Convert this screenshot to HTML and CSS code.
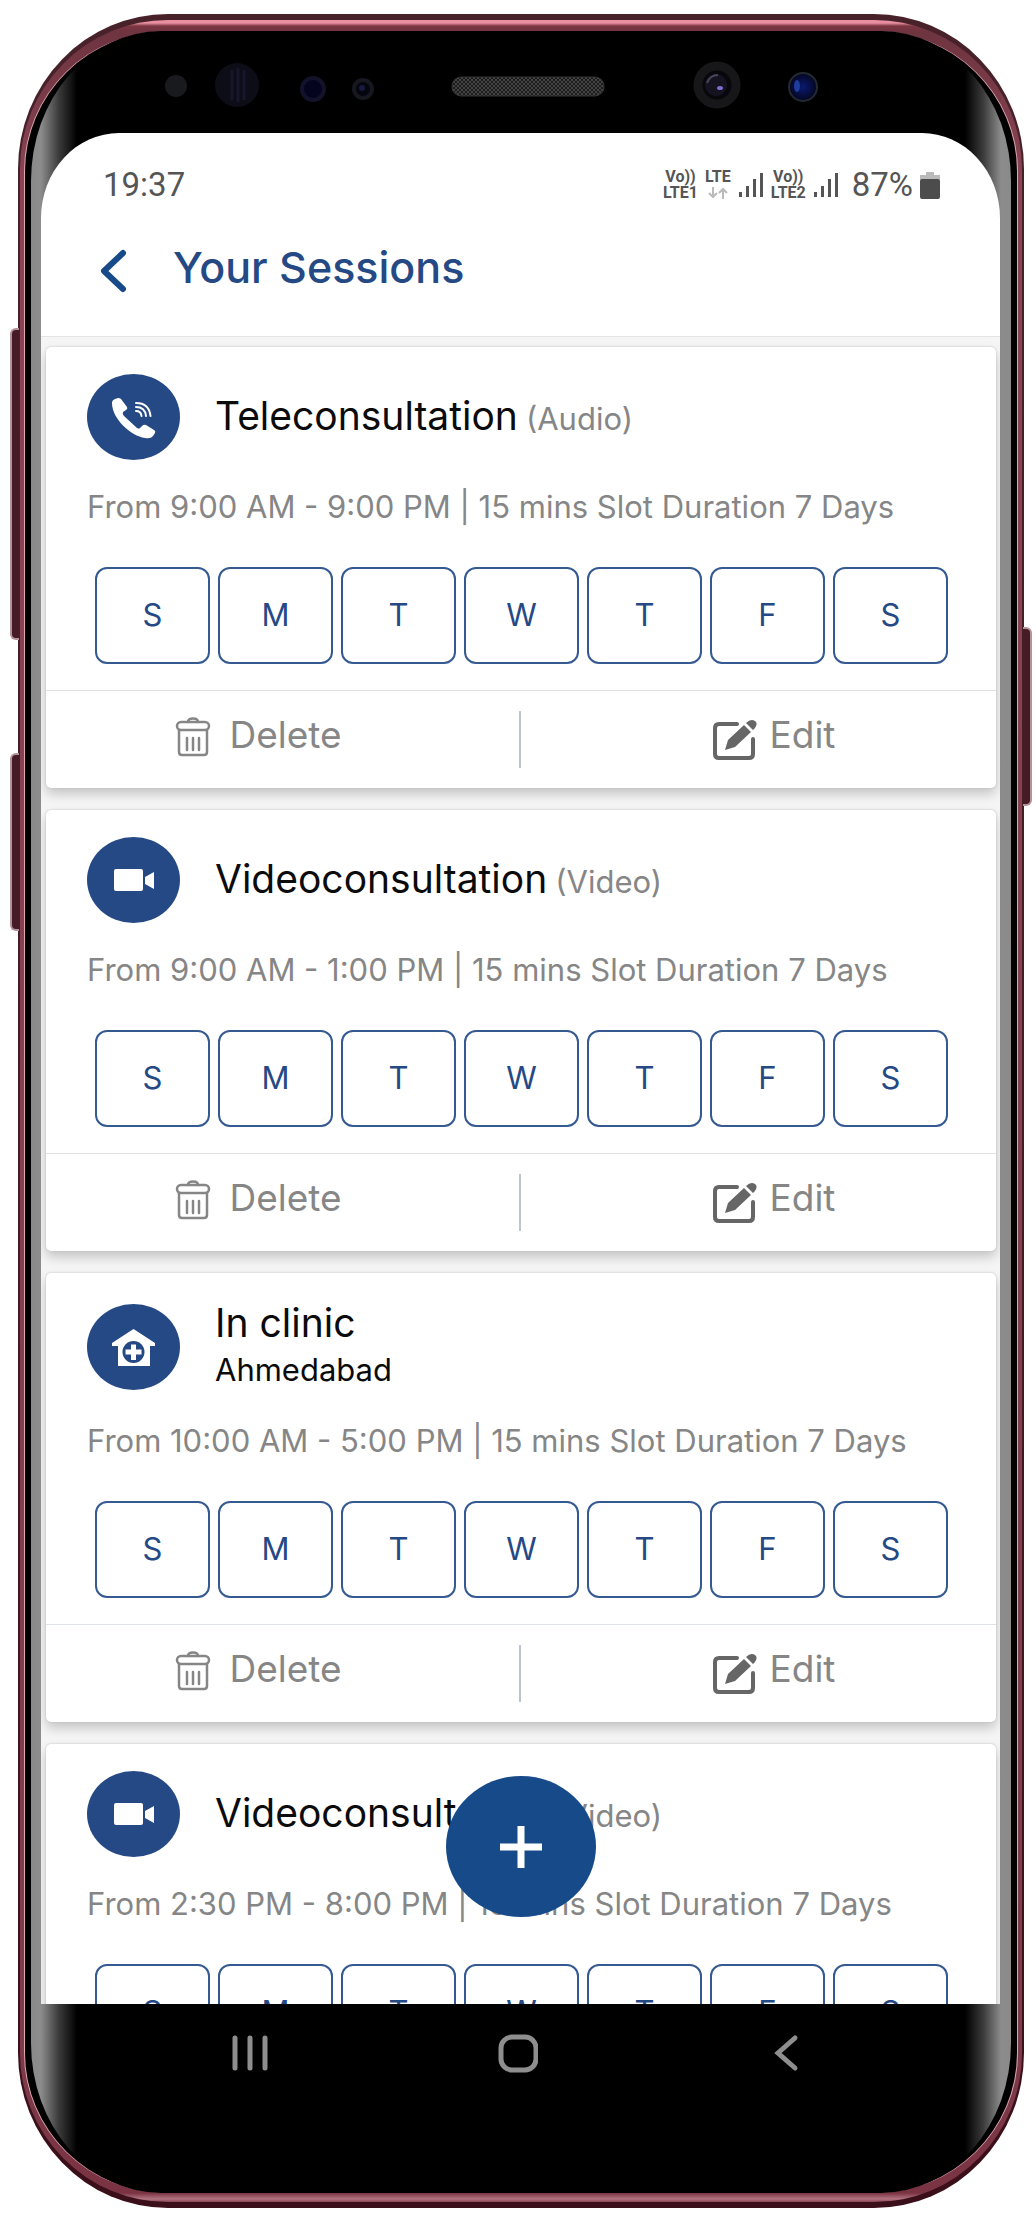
FILE: index.html
```html
<!DOCTYPE html>
<html lang="en">
<head>
<meta charset="utf-8">
<meta name="viewport" content="width=device-width, initial-scale=1">
<title>Your Sessions</title>
<link rel="stylesheet" href="styles.css">
</head>
<body>
<svg class="defs" aria-hidden="true">
  <symbol id="i-phone" viewBox="0 0 93 86">
    <path fill="#fff" d="M25 29Q25 26 28 25L31 24Q33 24 34 25L40 33Q41 35 39 36L36 38Q35 40 37 42L50 54Q52 55 53 54L55 52Q57 50 59 51L67 56Q69 57 68 59L66 62Q64 65 58 64C44 62 25 45 25 29Z"/>
    <path fill="none" stroke="#fff" stroke-width="2" stroke-linecap="round" d="M49 29Q62 29 63.500 42M49 33Q58 33 59 42M49 37Q54 37 54.500 42"/>
  </symbol>
  <symbol id="i-video" viewBox="0 0 93 86">
    <rect x="27" y="32" width="29" height="22" rx="2" fill="#fff"/>
    <path fill="#fff" d="M58 40L67 35V52L58 47Z"/>
  </symbol>
  <symbol id="i-clinic" viewBox="0 0 93 86">
    <path fill="#fff" d="M46.500 25L68 39V42H63V62H31V42H25V39Z"/>
    <circle cx="46.500" cy="48" r="11" fill="#254984"/>
    <path fill="#fff" d="M44 40.500H49V45.500H54.500V50.500H49V56H44V50.500H38.500V45.500H44Z"/>
  </symbol>
  <symbol id="i-trash" viewBox="0 0 36 40">
    <g fill="none" stroke="#868686" stroke-width="2.500" stroke-linecap="round">
      <path d="M13 5Q13 1.500 18 1.500T23 5"/>
      <rect x="2" y="5" width="32" height="8" rx="4"/>
      <path d="M4 13V35Q4 38 7 38H29Q32 38 32 35V13M12 21V33M18 21V33M24 21V33"/>
    </g>
  </symbol>
  <symbol id="i-edit" viewBox="0 0 46 44">
    <path fill="none" stroke="#666" stroke-width="4" stroke-linecap="round" d="M25 6H7Q3 6 3 10V36Q3 40 7 40H37Q41 40 41 36V21"/>
    <path fill="#666" d="M32 7L39 14L23 29L13 32L16 22ZM34 5Q39 0 43 3T41 12Z"/>
  </symbol>
  <symbol id="i-signal" viewBox="0 0 26 26">
    <path fill="#555" d="M1 20H4V25H1ZM8 14H11V25H8ZM15 7H18V25H15ZM22 1H25V25H22Z"/>
  </symbol>
</svg>

<div class="device">
  <span class="key key-volume"></span>
  <span class="key key-assist"></span>
  <span class="key key-power"></span>
  <div class="rim">
    <div class="bezel">
      <svg class="sensors" viewBox="25 31 992 102" aria-hidden="true">
        <defs>
          <pattern id="mesh" width="4" height="4" patternUnits="userSpaceOnUse">
            <rect width="4" height="4" fill="#1c1c1c"/>
            <path d="M0 0L4 4M4 0L0 4" stroke="#444" stroke-width="1"/>
          </pattern>
          <radialGradient id="lens"><stop offset="0" stop-color="#0a1a70"/><stop offset="1" stop-color="#04061f"/></radialGradient>
        </defs>
        <circle cx="176" cy="86" r="11" fill="#191a1d"/>
        <circle cx="237" cy="85" r="22" fill="#0d0d18"/>
        <path d="M232 70V100M238 68V102M244 70V100" stroke="#17172b" stroke-width="3"/>
        <circle cx="313" cy="89" r="11" fill="#04041f" stroke="#12122a" stroke-width="4"/>
        <circle cx="363" cy="89" r="9" fill="#05050f" stroke="#16171f" stroke-width="4"/>
        <circle cx="362" cy="88" r="3" fill="#171a3a"/>
        <rect x="452" y="77" width="152" height="19" rx="9" fill="url(#mesh)" stroke="#333"/>
        <circle cx="717" cy="85" r="19" fill="#07070c" stroke="#17171a" stroke-width="9"/>
        <circle cx="716" cy="85" r="11" fill="#15131f"/>
        <path d="M707 83Q710 75 718 75" stroke="#4b4658" stroke-width="2" fill="none"/>
        <ellipse cx="720" cy="88" rx="3" ry="2" fill="#7b6fd0"/>
        <circle cx="803" cy="87" r="14" fill="url(#lens)" stroke="#252a30" stroke-width="2"/>
        <ellipse cx="797" cy="86" rx="3" ry="6" fill="#1d3c9c"/>
      </svg>

      <main class="screen">
        <div class="status">
          <span class="clock">19:37</span>
          <div class="indicators">
            <span class="net">Vo))<br>LTE1</span>
            <span class="net">LTE
              <svg class="updown" viewBox="0 0 20 12" aria-hidden="true"><path fill="none" stroke="#bbb" stroke-width="2" d="M5 0V10M1 6L5 10L9 6M15 12V2M11 6L15 2L19 6"/></svg>
            </span>
            <svg class="signal" aria-hidden="true"><use href="#i-signal"/></svg>
            <span class="net">Vo))<br>LTE2</span>
            <svg class="signal" aria-hidden="true"><use href="#i-signal"/></svg>
            <span class="percent">87%</span>
            <svg class="battery" viewBox="0 0 20 27" aria-hidden="true"><path fill="#bbb" d="M6 0H14V3H20V8H0V3H6Z"/><rect y="7" width="20" height="20" rx="2" fill="#4c4c4c"/></svg>
          </div>
        </div>

        <header class="appbar">
          <button class="back" type="button" aria-label="Back">
            <svg viewBox="0 0 28 44" aria-hidden="true"><path fill="none" stroke="#174a89" stroke-width="6" stroke-linecap="round" stroke-linejoin="round" d="M24 4L5 22L24 40"/></svg>
          </button>
          <h1>Your Sessions</h1>
        </header>

        <section class="sessions">
          <article class="card">
            <div class="head">
              <svg class="avatar" aria-hidden="true"><use href="#i-phone"/></svg>
              <h2>Teleconsultation <small>(Audio)</small></h2>
            </div>
            <p class="meta">From 9:00 AM - 9:00 PM | 15 mins Slot Duration 7 Days</p>
            <div class="days">
              <button type="button">S</button><button type="button">M</button><button type="button">T</button><button type="button">W</button><button type="button">T</button><button type="button">F</button><button type="button">S</button>
            </div>
            <div class="actions">
              <button type="button" class="delete"><svg aria-hidden="true"><use href="#i-trash"/></svg>Delete</button>
              <button type="button" class="edit"><svg aria-hidden="true"><use href="#i-edit"/></svg>Edit</button>
            </div>
          </article>

          <article class="card">
            <div class="head">
              <svg class="avatar" aria-hidden="true"><use href="#i-video"/></svg>
              <h2>Videoconsultation <small>(Video)</small></h2>
            </div>
            <p class="meta">From 9:00 AM - 1:00 PM | 15 mins Slot Duration 7 Days</p>
            <div class="days">
              <button type="button">S</button><button type="button">M</button><button type="button">T</button><button type="button">W</button><button type="button">T</button><button type="button">F</button><button type="button">S</button>
            </div>
            <div class="actions">
              <button type="button" class="delete"><svg aria-hidden="true"><use href="#i-trash"/></svg>Delete</button>
              <button type="button" class="edit"><svg aria-hidden="true"><use href="#i-edit"/></svg>Edit</button>
            </div>
          </article>

          <article class="card">
            <div class="head">
              <svg class="avatar" aria-hidden="true"><use href="#i-clinic"/></svg>
              <div>
                <h2>In clinic</h2>
                <p class="place">Ahmedabad</p>
              </div>
            </div>
            <p class="meta">From 10:00 AM - 5:00 PM | 15 mins Slot Duration 7 Days</p>
            <div class="days">
              <button type="button">S</button><button type="button">M</button><button type="button">T</button><button type="button">W</button><button type="button">T</button><button type="button">F</button><button type="button">S</button>
            </div>
            <div class="actions">
              <button type="button" class="delete"><svg aria-hidden="true"><use href="#i-trash"/></svg>Delete</button>
              <button type="button" class="edit"><svg aria-hidden="true"><use href="#i-edit"/></svg>Edit</button>
            </div>
          </article>

          <article class="card">
            <div class="head">
              <svg class="avatar" aria-hidden="true"><use href="#i-video"/></svg>
              <h2>Videoconsultation <small>(Video)</small></h2>
            </div>
            <p class="meta">From 2:30 PM - 8:00 PM | 15 mins Slot Duration 7 Days</p>
            <div class="days">
              <button type="button">S</button><button type="button">M</button><button type="button">T</button><button type="button">W</button><button type="button">T</button><button type="button">F</button><button type="button">S</button>
            </div>
          </article>
        </section>

        <button class="fab" type="button" aria-label="Add session">
          <svg viewBox="0 0 44 44" aria-hidden="true"><path stroke="#fff" stroke-width="7" d="M22 1V43M1 22H43"/></svg>
        </button>
      </main>

      <nav class="navbar" aria-label="System">
        <button type="button" aria-label="Recent apps"><svg viewBox="0 0 40 40" aria-hidden="true"><path stroke="#8e8e8e" stroke-width="5" stroke-linecap="round" d="M5 5V35M20 5V35M35 5V35"/></svg></button>
        <button type="button" aria-label="Home"><svg viewBox="0 0 40 40" aria-hidden="true"><rect x="3" y="4" width="35" height="33" rx="11" fill="none" stroke="#8e8e8e" stroke-width="5"/></svg></button>
        <button type="button" aria-label="Back"><svg viewBox="0 0 40 40" aria-hidden="true"><path fill="none" stroke="#8e8e8e" stroke-width="5" stroke-linecap="round" d="M29 5L12 20L29 35"/></svg></button>
      </nav>
    </div>
  </div>
</div>
</body>
</html>
```

FILE: styles.css
```css
* { box-sizing: border-box; }

body {
  margin: 0;
  padding: 14px 12px 13px 18px;
  background: #fff;
  font-family: Inter, "Liberation Sans", sans-serif;
  color: #0b0b0b;
}

h1, h2, p { margin: 0; font-weight: 400; }

button {
  margin: 0;
  padding: 0;
  border: 0;
  background: none;
  font: inherit;
  color: inherit;
}

svg { display: block; }
.defs { position: absolute; width: 0; height: 0; }

/* Handset */
.device {
  position: relative;
  height: calc(100vh - 27px);
  min-height: 900px;
  padding: 6px 2px;
  border-radius: 150px / 155px;
  background: linear-gradient(#48222a, #451b25 50%, #3a0f1a);
}

.rim {
  height: 100%;
  padding: 11px 5px 9px;
  border-radius: 148px / 149px;
  background: linear-gradient(#ea8fa0 0, #ea8fa0 3px, #7d3643 6px, #6e3440 12px, #8a4555 160px, #7d3c4b calc(100% - 160px), #7a3342 calc(100% - 9px), #b27480 calc(100% - 3px), #8a4555 100%);
}

.bezel {
  position: relative;
  display: flex;
  flex-direction: column;
  height: 100%;
  padding: 0 17px 0 16px;
  border-radius: 143px / 140px;
  background: #000;
  box-shadow: -1px 0 0 #e2a6b0, 1px 0 0 #e2a6b0;
}

/* Light falling on the curved glass edges */
.bezel::before {
  content: "";
  position: absolute;
  inset: 0 6px;
  border-radius: 130px / 150px;
  background: linear-gradient(to right, #8a8a8a 0, #8c8c8c 10px, #3a3a3a 28px, #000 46px, #000 calc(100% - 46px), #3a3a3a calc(100% - 28px), #8c8c8c calc(100% - 10px), #8a8a8a 100%);
}

.key {
  position: absolute;
  width: 9px;
  border: 2px solid #b39299;
  background: #451b25;
}
.key-volume { left: -8px; top: 314px; height: 312px; border-right: 0; border-radius: 6px 0 0 6px; }
.key-assist { left: -8px; top: 739px; height: 178px; border-right: 0; border-radius: 6px 0 0 6px; }
.key-power { right: -8px; top: 613px; height: 179px; border-left: 0; border-radius: 0 6px 6px 0; }

.sensors {
  position: relative;
  width: calc(100% + 33px);
  height: 102px;
  margin: 0 -17px 0 -16px;
  flex: none;
}

/* Screen */
.screen {
  position: relative;
  display: flex;
  flex-direction: column;
  flex: 1;
  min-height: 0;
  overflow: hidden;
  border-radius: 78px 78px 0 0 / 85px 85px 0 0;
  background: #fff;
}

.status {
  display: flex;
  justify-content: space-between;
  align-items: center;
  padding: 30px 60px 0 62px;
  height: 74px;
  flex: none;
  font-family: Roboto, sans-serif;
  font-size: 33px;
  line-height: 42px;
  color: #555;
}
.indicators { display: flex; align-items: center; gap: 7px; }
.net { font-size: 16px; line-height: 16px; font-weight: 700; text-align: center; }
.updown { width: 20px; height: 12px; margin: 2px auto; }
.signal { width: 26px; height: 26px; }
.percent { margin-left: 6px; }
.battery { width: 20px; height: 27px; }

.appbar {
  display: flex;
  align-items: center;
  gap: 46px;
  flex: none;
  height: 130px;
  padding: 0 58px 10px;
  border-bottom: 1px solid #e4e4e4;
}
.back svg { width: 28px; height: 44px; margin-top: 8px; }
.appbar h1 {
  font-size: 43px;
  line-height: 48px;
  font-weight: 500;
  color: #254984;
}

.sessions {
  display: flex;
  flex-direction: column;
  gap: 22px;
  flex: 1;
  min-height: 0;
  padding: 10px 4px 0 5px;
  background: #f5f5f5;
}

.card {
  flex: none;
  border-radius: 5px;
  background: #fff;
  box-shadow: 0 0 2px #bbb, 0 6px 12px rgba(0, 0, 0, 0.2);
}

.head {
  display: flex;
  align-items: center;
  gap: 35px;
  padding: 27px 41px 0;
}
.avatar {
  flex: none;
  width: 93px;
  height: 86px;
  border-radius: 50%;
  background: #254984;
}
.head h2 {
  display: flex;
  align-items: baseline;
  gap: 8px;
  font-size: 39px;
  line-height: 46px;
}
.head small { font-size: 31px; color: #868686; }
.place { font-size: 31px; line-height: 48px; }

.meta {
  padding: 27px 41px 0;
  font-size: 31px;
  line-height: 40px;
  white-space: nowrap;
  color: #868686;
}

.days {
  display: grid;
  grid-template-columns: repeat(7, 1fr);
  gap: 8px;
  padding: 40px 48px 26px 49px;
}
.days button {
  height: 97px;
  padding-bottom: 2px;
  border: 2px solid #355a92;
  border-radius: 12px;
  font-size: 31px;
  line-height: 40px;
  color: #254984;
}

.actions {
  display: grid;
  grid-template-columns: 1fr 1fr;
  padding: 20px 0;
  border-top: 1px solid #dfe3e8;
}
.actions button {
  display: flex;
  align-items: flex-start;
  justify-content: center;
  height: 57px;
  font-size: 37px;
  line-height: 48px;
  color: #868686;
}
.actions .delete { padding-right: 48px; border-right: 2px solid #bcc4d0; }
.actions .edit { padding-left: 30px; }
.delete svg { width: 36px; height: 40px; margin: 6px 18px 0 0; }
.edit svg { width: 46px; height: 44px; margin: 7px 12px 0 0; }

.fab {
  position: absolute;
  left: calc(50% - 75px);
  bottom: 87px;
  display: flex;
  align-items: center;
  justify-content: center;
  width: 150px;
  height: 141px;
  border-radius: 50%;
  background: #174a89;
}
.fab svg { width: 44px; height: 44px; }

/* System navigation */
.navbar {
  position: relative;
  display: grid;
  grid-template-columns: repeat(3, 1fr);
  align-items: start;
  flex: none;
  height: 189px;
  padding: 29px 80px 0 75px;
}
.navbar button { display: flex; justify-content: center; }
.navbar svg { width: 40px; height: 40px; }
```
